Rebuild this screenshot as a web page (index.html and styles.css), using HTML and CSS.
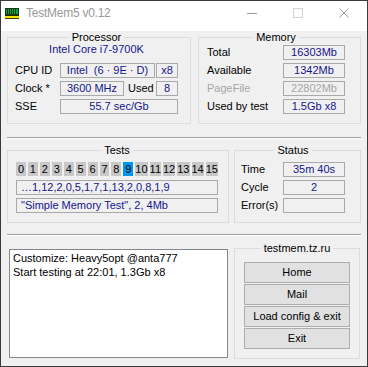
FILE: index.html
```html
<!DOCTYPE html>
<html>
<head>
<meta charset="utf-8">
<title>TestMem5 v0.12</title>
<link rel="stylesheet" href="styles.css">
</head>
<body>
<div class="win">
  <div class="titlebar">
    <svg class="appicon" width="14" height="11" viewBox="0 0 14 11">
      <rect x="0" y="0" width="14" height="7" fill="#1f9f3f"/>
      <rect x="0.5" y="0.5" width="13" height="6" fill="none" stroke="#0d3d16"/>
      <path d="M2.5 1v5M4.5 1v5M6.5 1v5M8.5 1v5M10.5 1v5" stroke="#0d3d16"/>
      <rect x="0" y="7" width="14" height="1" fill="#2a2a10"/>
      <rect x="0" y="8" width="14" height="2" fill="#f4e800"/>
      <rect x="0" y="10" width="14" height="1" fill="#3a3a10"/>
    </svg>
    <span class="title">TestMem5 v0.12</span>
    <div class="caps">
      <span class="cap"><svg width="10" height="10" viewBox="0 0 10 10"><path d="M0 5.5h10" stroke="#999"/></svg></span>
      <span class="cap"><svg width="10" height="10" viewBox="0 0 10 10"><rect x="0.5" y="0.5" width="9" height="9" fill="none" stroke="#d2d2d2"/></svg></span>
      <span class="cap"><svg width="10" height="10" viewBox="0 0 10 10"><path d="M0.5 0.5l9 9M9.5 0.5l-9 9" stroke="#999"/></svg></span>
    </div>
  </div>
  <div class="client">
    <div class="row row-top">
      <fieldset class="grp proc">
        <legend>Processor</legend>
        <div class="model">Intel Core i7-9700K</div>
        <div class="frow"><span class="lbl w45">CPU ID</span><span class="fld w95">Intel  (6 · 9E · D)</span><span class="fld w22 ml1">x8</span></div>
        <div class="frow"><span class="lbl w45">Clock *</span><span class="fld w64">3600 MHz</span><span class="lbl used">Used</span><span class="fld w22">8</span></div>
        <div class="frow"><span class="lbl w45">SSE</span><span class="fld w118">55.7 sec/Gb</span></div>
      </fieldset>
      <fieldset class="grp mem">
        <legend>Memory</legend>
        <div class="frow"><span class="lbl w76">Total</span><span class="fld w62">16303Mb</span></div>
        <div class="frow"><span class="lbl w76">Available</span><span class="fld w62">1342Mb</span></div>
        <div class="frow"><span class="lbl w76 dis">PageFile</span><span class="fld w62 dis">22802Mb</span></div>
        <div class="frow"><span class="lbl w76">Used by test</span><span class="fld w62">1.5Gb x8</span></div>
      </fieldset>
    </div>
    <div class="sep sep1"></div>
    <div class="row row-mid">
      <fieldset class="grp tests">
        <legend>Tests</legend>
        <div class="cells">
          <span class="cell">0</span><span class="cell">1</span><span class="cell">2</span><span class="cell">3</span>
          <span class="cell">4</span><span class="cell">5</span><span class="cell">6</span><span class="cell">7</span>
          <span class="cell">8</span><span class="cell on">9</span><span class="cell">10</span><span class="cell">11</span>
          <span class="cell">12</span><span class="cell">13</span><span class="cell">14</span><span class="cell">15</span>
        </div>
        <div class="fld left">…1,12,2,0,5,1,7,1,13,2,0,8,1,9</div>
        <div class="fld left gap3">"Simple Memory Test", 2, 4Mb</div>
      </fieldset>
      <fieldset class="grp status">
        <legend>Status</legend>
        <div class="frow"><span class="lbl w42">Time</span><span class="fld w62">35m 40s</span></div>
        <div class="frow"><span class="lbl w42">Cycle</span><span class="fld w62">2</span></div>
        <div class="frow"><span class="lbl w42">Error(s)</span><span class="fld w62"></span></div>
      </fieldset>
    </div>
    <div class="sep sep2"></div>
    <div class="row row-bot">
      <div class="log">Customize: Heavy5opt @anta777<br>Start testing at 22:01, 1.3Gb x8</div>
      <fieldset class="grp links">
        <legend>testmem.tz.ru</legend>
        <div class="btn">Home</div>
        <div class="btn">Mail</div>
        <div class="btn">Load config &amp; exit</div>
        <div class="btn">Exit</div>
      </fieldset>
    </div>
  </div>
</div>
</body>
</html>
```

FILE: styles.css
```css
* { box-sizing: border-box; }
html, body { margin: 0; padding: 0; }
body {
  width: 368px;
  height: 367px;
  background: #f0f0f0;
  font-family: "Liberation Sans", Arial, sans-serif;
  font-size: 11px;
  color: #000;
}
.win {
  width: 368px;
  height: 367px;
  border: 1px solid #3a3a3e;
  background: #f0f0f0;
  display: flex;
  flex-direction: column;
}
.titlebar {
  flex: none;
  height: 30px;
  background: #fff;
  display: flex;
  align-items: flex-start;
}
.appicon { margin: 7px 0 0 4px; flex: none; }
.title {
  margin: 5px 0 0 7px;
  font-size: 12px;
  line-height: 14px;
  color: #999;
  letter-spacing: -0.25px;
}
.caps { margin-left: auto; display: flex; }
.cap {
  width: 46px;
  height: 30px;
  display: flex;
  justify-content: center;
  align-items: flex-start;
  padding-top: 7px;
}
.cap svg { display: block; }
.client {
  flex: 1;
  padding: 0 6px;
  display: flex;
  flex-direction: column;
}
.row { display: flex; }
.grp {
  margin: 0;
  padding: 0;
  border: 1px solid #dcdcdc;
  min-width: 0;
}
.grp legend {
  margin: 0 auto;
  padding: 0 3px;
  font-size: 11px;
  line-height: 12px;
}
.row-top { gap: 7px; }
.proc { width: 184px; padding: 0 12px 9px 7px; }
.mem { width: 163px; padding: 2px 15px 9px 8px; }
.model {
  text-align: center;
  line-height: 13px;
  color: #16168e;
  margin-bottom: 7px;
}
.frow { display: flex; height: 15px; }
.frow + .frow { margin-top: 3px; }
.lbl { line-height: 15px; white-space: nowrap; flex: none; }
.lbl.dis, .fld.dis { color: #a6a6a6; }
.w42 { width: 42px; }
.w45 { width: 45px; }
.w76 { width: 76px; }
.used { width: 32px; padding-left: 4px; }
.fld {
  flex: none;
  height: 15px;
  border: 1px solid #a9a9a9;
  line-height: 13px;
  text-align: center;
  color: #16168e;
  white-space: pre;
  overflow: hidden;
}
.fld.left { text-align: left; padding-left: 4px; }
.gap3 { margin-top: 3px; }
.w22 { width: 22px; }
.w62 { width: 62px; }
.w64 { width: 64px; }
.w95 { width: 95px; }
.w118 { width: 118px; }
.ml1 { margin-left: 1px; }
.sep {
  height: 2px;
  border-top: 1px solid #a0a0a0;
  border-bottom: 1px solid #fff;
  flex: none;
}
.sep1 { margin-top: 13px; }
.sep2 { margin-top: 11px; }
.row-mid { margin-top: 5px; gap: 5px; }
.tests { width: 222px; padding: 6px 10px 9px 8px; }
.status { width: 127px; padding: 6px 15px 9px 6px; }
.cells {
  display: grid;
  grid-template-columns: repeat(16, 1fr);
  column-gap: 2px;
  height: 14px;
  margin-bottom: 4px;
}
.cell {
  background: #c8c8c8;
  text-align: center;
  line-height: 14px;
  white-space: nowrap;
  overflow: visible;
  display: flex;
  justify-content: center;
}
.cell.on { background: #0098ef; }
.row-bot { align-items: flex-start; }
.log {
  width: 219px;
  height: 109px;
  margin: 13px 0 0 2px;
  border: 1px solid #828790;
  background: #fff;
  padding: 1px 3px;
  line-height: 14px;
}
.links {
  width: 126px;
  margin: 6px 0 0 6px;
  padding: 8px 9px 9px;
}
.btn {
  height: 21px;
  border: 1px solid #adadad;
  background: #e1e1e1;
  text-align: center;
  line-height: 19px;
  white-space: nowrap;
}
.btn + .btn { margin-top: 1px; }
```
